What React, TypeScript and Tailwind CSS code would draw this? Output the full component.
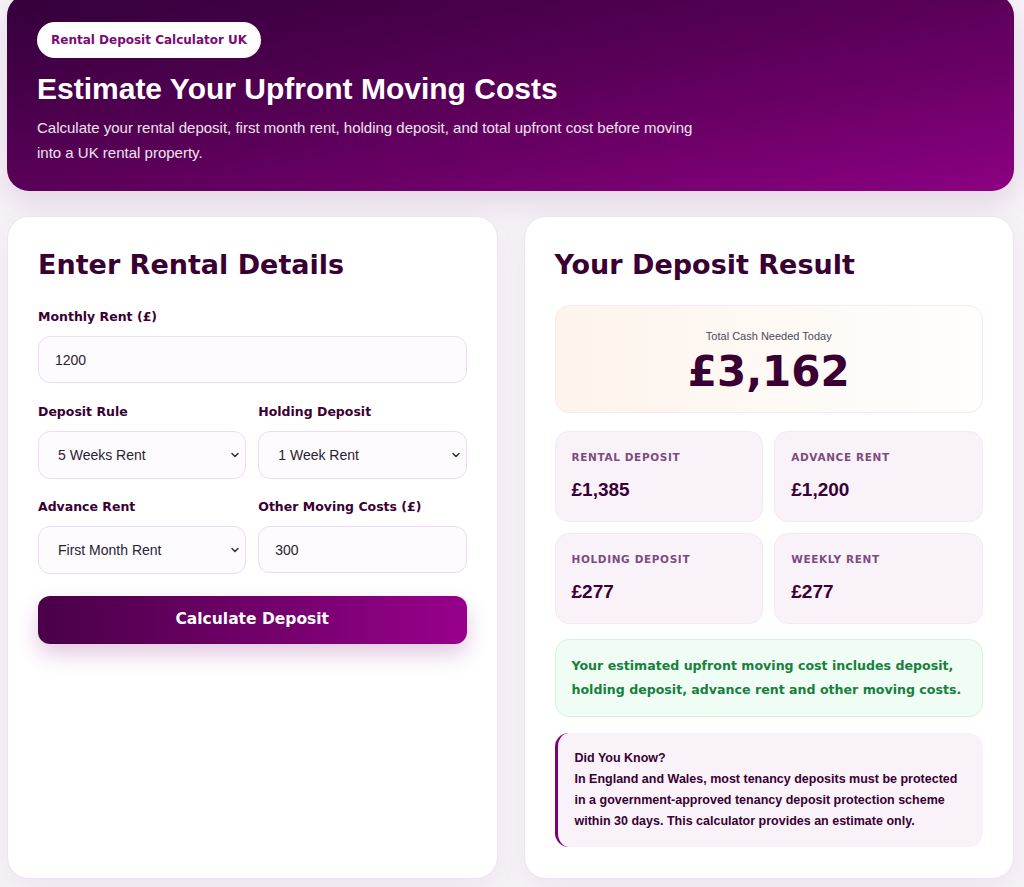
import { ChevronDown } from 'lucide-react'

const HEAVY = "font-['DejaVu_Sans',sans-serif] font-bold"
const SANS = "font-['Liberation_Sans',Arial,sans-serif]"

function Field({ label, children }: { label: string; children: React.ReactNode }) {
  return (
    <div className="flex flex-col">
      <label className={`${HEAVY} text-[12.5px] leading-[17px] text-[#3a0033] mb-[11px]`}>{label}</label>
      {children}
    </div>
  )
}

function FakeSelect({ value }: { value: string }) {
  return (
    <div className="h-[48px] rounded-xl border border-[#ecdcf0] bg-[#fdfbfd] pl-[19px] pr-[4px] flex items-center justify-between text-sm text-[#2b2233]">
      <span>{value}</span>
      <ChevronDown className="w-[12px] h-[12px] text-[#333]" strokeWidth={3} />
    </div>
  )
}

function FakeInput({ value }: { value: string }) {
  return (
    <div className="h-[47px] rounded-xl border border-[#ecdcf0] bg-[#fdfbfd] px-4 flex items-center text-sm text-[#2b2233]">
      {value}
    </div>
  )
}

function Stat({ label, value }: { label: string; value: string }) {
  return (
    <div className="rounded-[14px] bg-[#f9f3f9] border border-[#f3e9f3] pl-4 pt-[19px] pb-[20px]">
      <div className={`${HEAVY} text-[10.5px] leading-[13px] tracking-[0.06em] uppercase text-[#7d4b7f]`}>{label}</div>
      <div className="mt-[14px] text-[19px] leading-[23px] font-bold text-[#3a0033]">{value}</div>
    </div>
  )
}

export default function App() {
  return (
    <div className={`${SANS} min-h-screen bg-[#f7f2f8] pl-[7px] pr-[10px] pb-[8px]`}>
      {/* Hero */}
      <header className="-mt-[6px] rounded-[22px] bg-gradient-to-br from-[#33003a] via-[#5a0058] to-[#8c0082] pt-[28px] pb-[26px] px-[30px] shadow-[0_12px_30px_rgba(80,0,80,0.12)]">
        <span className={`${HEAVY} inline-flex items-center h-[36px] px-[14px] rounded-full bg-white text-[12px] text-[#7b0a74]`}>
          Rental Deposit Calculator UK
        </span>
        <h1 className="mt-[14px] text-[30px] leading-[34px] font-bold text-white">Estimate Your Upfront Moving Costs</h1>
        <p className="mt-[9px] max-w-[670px] text-[15px] leading-[25px] text-white/90">
          Calculate your rental deposit, first month rent, holding deposit, and total upfront cost before moving into a UK rental property.
        </p>
      </header>

      <div className="mt-[25px] grid grid-cols-2 gap-[26px]">
        {/* Form card */}
        <section className="rounded-[22px] bg-white border border-[#f0e2f2] shadow-[0_10px_30px_rgba(90,0,80,0.06)] px-[30px] pt-[31px] pb-[31px]">
          <h2 className={`${HEAVY} text-[27px] leading-[34px] text-[#3a0033]`}>Enter Rental Details</h2>

          <div className="mt-[26px] flex flex-col">
            <Field label="Monthly Rent (£)">
              <FakeInput value="1200" />
            </Field>
            <div className="mt-[20px] grid grid-cols-2 gap-x-[12px] gap-y-[19px]">
              <Field label="Deposit Rule">
                <FakeSelect value="5 Weeks Rent" />
              </Field>
              <Field label="Holding Deposit">
                <FakeSelect value="1 Week Rent" />
              </Field>
              <Field label="Advance Rent">
                <FakeSelect value="First Month Rent" />
              </Field>
              <Field label="Other Moving Costs (£)">
                <FakeInput value="300" />
              </Field>
            </div>
            <button className={`${HEAVY} mt-[22px] h-[48px] rounded-xl bg-gradient-to-r from-[#4a0048] to-[#98008b] text-white text-[15.5px] shadow-[0_10px_22px_rgba(128,0,120,0.22)]`}>
              Calculate Deposit
            </button>
          </div>
        </section>

        {/* Result card */}
        <section className="rounded-[22px] bg-white border border-[#f0e2f2] shadow-[0_10px_30px_rgba(90,0,80,0.06)] px-[30px] pt-[31px] pb-[31px]">
          <h2 className={`${HEAVY} text-[27px] leading-[34px] text-[#3a0033]`}>Your Deposit Result</h2>

          <div className="mt-[23px] rounded-[14px] border border-[#f5e9f0] bg-gradient-to-r from-[#fdf4ec] to-[#fffefd] pt-[24px] pb-[17px] text-center">
            <div className="text-[11px] leading-[13px] text-[#4a4a55]">Total Cash Needed Today</div>
            <div className={`${HEAVY} mt-[6px] text-[42px] leading-[46px] text-[#3a0033]`}>£3,162</div>
          </div>

          <div className="mt-[18px] grid grid-cols-2 gap-[11px]">
            <Stat label="Rental Deposit" value="£1,385" />
            <Stat label="Advance Rent" value="£1,200" />
            <Stat label="Holding Deposit" value="£277" />
            <Stat label="Weekly Rent" value="£277" />
          </div>

          <div className={`${HEAVY} mt-[15px] rounded-[14px] border border-[#d3f3dd] bg-[#f0fdf4] pl-[16px] pr-[4px] py-[14px] text-[12.6px] leading-[24px] text-[#17803d]`}>
            Your estimated upfront moving cost includes deposit, holding deposit, advance rent and other moving costs.
          </div>

          <div className="mt-[16px] rounded-[14px] border-l-[3px] border-[#7d0074] bg-[#f9f3f9] pl-[17px] pr-[24px] py-[15px] text-[12.5px] leading-[21px] font-bold text-[#3a0033]">
            <div>Did You Know?</div>
            In England and Wales, most tenancy deposits must be protected in a government-approved tenancy deposit protection scheme within 30 days. This calculator provides an estimate only.
          </div>
        </section>
      </div>
    </div>
  )
}
